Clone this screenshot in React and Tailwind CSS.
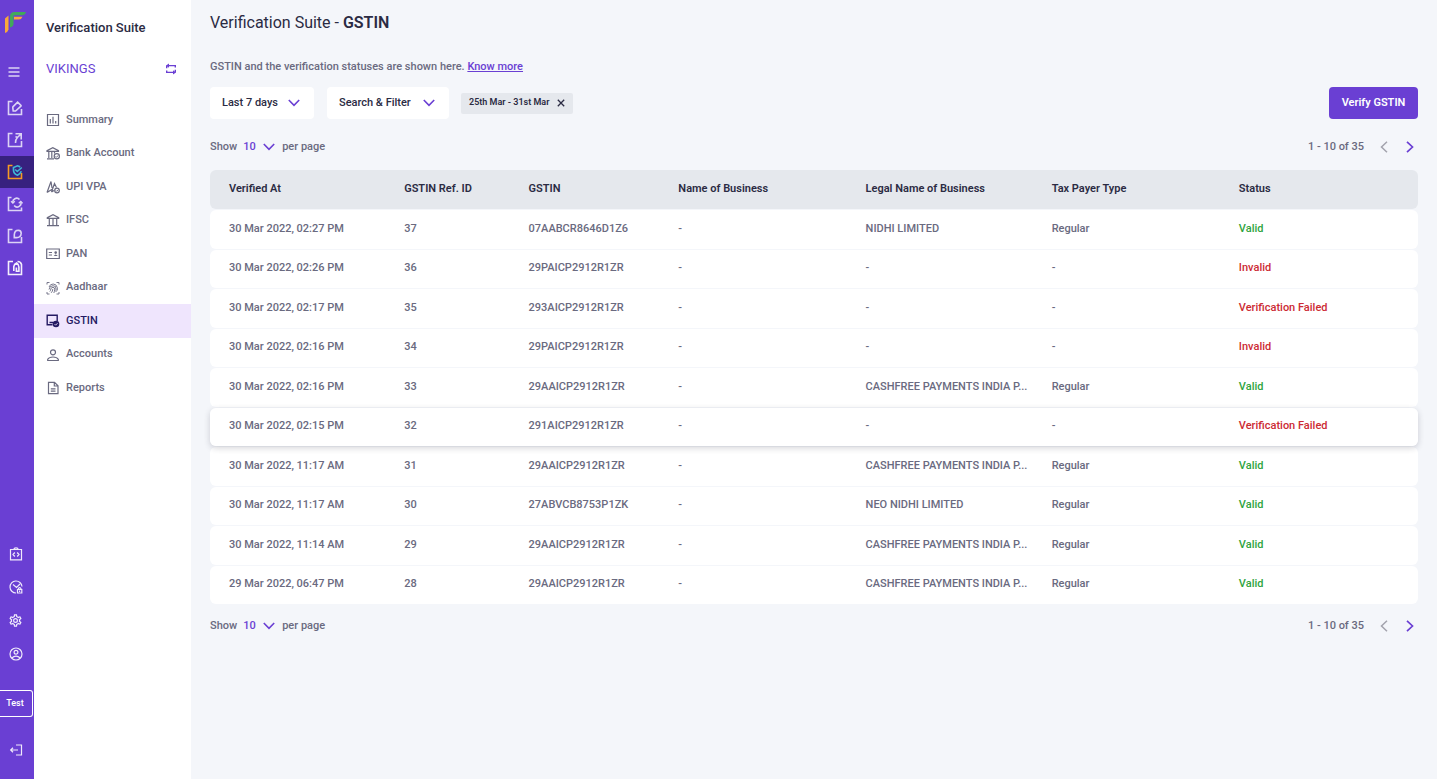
import React from "react";

const frame = "M5.500 1.500H1.500V14.500H14.500V9";

function RailIcon({ children, label, active }) {
  return (
    <a
      href="#"
      aria-label={label}
      className={
        active
          ? "flex h-8 w-full items-center justify-center bg-[#37217f] pr-1"
          : "flex h-8 w-full items-center justify-center pr-1 text-[#dcd3f5]"
      }
    >
      <svg viewBox="0 0 16 16" className="size-4" fill="none" stroke="currentColor" strokeWidth="1.6">
        {children}
      </svg>
    </a>
  );
}

function Rail() {
  return (
    <nav aria-label="Products" className="flex w-[34px] shrink-0 flex-col bg-[#6a3fd3]">
      <a href="#" aria-label="Home" className="flex h-[50px] items-start pt-3 pl-[5px]">
        <svg viewBox="0 0 21 21" className="size-[21px]">
          <path d="M0 21V6.500L3.500 3.500V17.500Q2.800 20.200 0 21Z" fill="#f9a83a" />
          <path d="M9 7.500V4.800H17.500Q16.500 7.500 14 7.500Z" fill="#f9a83a" />
          <path d="M5 15.500V4.500Q5 0 9.500 0H21Q20 3.300 17 3.300H9.500Q8.500 3.300 8.500 4.500V12Q8.300 14.800 5 15.500Z" fill="#41a95a" />
        </svg>
      </a>
      <button type="button" aria-label="Open menu" className="flex h-[42px] items-center justify-center pt-0.5 pr-[6px] text-[#dcd3f5]">
        <svg viewBox="0 0 12 12" className="size-3" fill="none" stroke="currentColor" strokeWidth="1.400">
          <path d="M.5 2H11.500M.5 6H11.500M.5 10H11.500" />
        </svg>
      </button>
      <RailIcon label="Payments">
        <path d={frame} />
        <path d="M10.600 2.200 13.900 5.300Q14.300 5.700 13.900 6.100L8.600 11H6.200L5.800 7.600Q5.700 7 6.100 6.600Z" />
      </RailIcon>
      <RailIcon label="Payouts">
        <path d={frame} />
        <path d="M8.500 1.800H14.200V7.500M13.800 2.200 10.600 5.300Q8.400 7.600 8.500 11M8.500 4.500 10.400 5.600" />
      </RailIcon>
      <RailIcon label="Verification Suite" active>
        <path d={frame} stroke="#f59b23" />
        <path d="M14.300 7.300Q13.300 10 10.500 11.200Q6.500 9.700 6.500 6V3.500L10.500 1.800L13.200 2.900" stroke="#3fb6d6" strokeWidth="1.700" />
        <path d="M8.200 5.500 10.300 7.500 14.800 3.500" stroke="#3fb6d6" />
      </RailIcon>
      <RailIcon label="Subscriptions">
        <path d="M4.500 1.500H1.500V14.500H14.500V11.500" />
        <path d="M6 7A3.800 3.800 0 0 1 12.500 3.500M13.600 5.500A3.800 3.800 0 0 1 7.200 9.500" />
        <path d="M4 5.300 5.900 7.200 7.800 5.300M11.800 7.300 13.700 5.400 15.600 7.300" strokeWidth="1.300" />
      </RailIcon>
      <RailIcon label="Payment forms">
        <path d={frame} />
        <path d="M7.300 9.600V6.800Q7.500 2.200 11.300 2.200Q14.200 2.400 14.200 5.200Q14 9.600 9.500 9.600Z" />
      </RailIcon>
      <RailIcon label="Accounts">
        <g stroke="#f3effc">
          <path d="M6 1.500H1.500V14.500H14.500V4.500Q13.800 1.500 10.500 1.500" />
          <path d="M6.800 11V6.500Q7.300 4 9.600 3Q11.900 4.500 11.900 7V11.200H9.400V7.500" />
        </g>
      </RailIcon>

      <div className="mt-auto flex flex-col text-[#efeafb]">
        <a href="#" aria-label="Developers" className="flex h-[33px] items-center justify-center pr-[3px]">
          <svg viewBox="0 0 14 14" className="size-[14px]" fill="none" stroke="currentColor" strokeWidth="1.200">
            <path d="M1.500 2.500H12.500V12.800H1.500ZM5 2.500Q5 .8 7 .8T9 2.500M5.800 5.500 4 7.500 5.800 9.500M8.200 5.500 10 7.500 8.200 9.500" />
          </svg>
        </a>
        <a href="#" aria-label="Activity" className="flex h-[34px] items-center justify-center pr-[3px]">
          <svg viewBox="0 0 14 14" className="size-[14px]" fill="none" stroke="currentColor" strokeWidth="1.200">
            <path d="M7 13A6 6 0 1 1 13 6.500M4 4.500 7.500 7.500 11 4" />
            <path d="M8.500 9.500H12.800V13H8.500ZM9.400 9.500V8.500Q10.600 6.800 11.900 8.500V9.500M10.600 10.500V12" />
          </svg>
        </a>
        <a href="#" aria-label="Settings" className="flex h-[33px] items-center justify-center pr-[3px]">
          <svg viewBox="0 0 24 24" className="size-[15px]" fill="currentColor">
            <path d="M19.430 12.980c.04-.32.07-.64.07-.98 0-.34-.03-.66-.07-.98l2.110-1.650c.19-.15.24-.42.12-.64l-2-3.460c-.09-.16-.26-.25-.44-.25-.06 0-.12.01-.17.03l-2.490 1c-.52-.4-1.080-.73-1.690-.98l-.38-2.650C14.460 2.180 14.250 2 14 2h-4c-.25 0-.46.18-.49.42l-.38 2.650c-.61.25-1.170.59-1.690.98l-2.490-1c-.06-.02-.12-.03-.18-.03-.17 0-.34.09-.43.25l-2 3.460c-.13.22-.07.49.12.64l2.110 1.650c-.04.32-.07.65-.07.98 0 .33.03.66.07.98l-2.110 1.650c-.19.15-.24.42-.12.64l2 3.460c.09.16.26.25.44.25.06 0 .12-.01.17-.03l2.490-1c.52.4 1.080.73 1.690.98l.38 2.650c.03.24.24.42.49.42h4c.25 0 .46-.18.49-.42l.38-2.650c.61-.25 1.170-.59 1.690-.98l2.490 1c.06.02.12.03.18.03.17 0 .34-.09.43-.25l2-3.460c.12-.22.07-.49-.12-.64l-2.110-1.650zm-1.980-1.710c.04.31.05.52.05.73 0 .21-.02.43-.05.73l-.14 1.130.89.7 1.080.84-.7 1.210-1.270-.51-1.040-.42-.9.680c-.43.32-.84.56-1.250.73l-1.060.43-.16 1.130-.2 1.350h-1.400l-.19-1.350-.16-1.130-1.060-.43c-.43-.18-.83-.41-1.230-.71l-.91-.7-1.060.43-1.270.51-.7-1.210 1.080-.84.89-.7-.14-1.130c-.03-.31-.05-.54-.05-.74s.02-.43.05-.73l.14-1.130-.89-.7-1.080-.84.7-1.210 1.270.51 1.040.42.9-.68c.43-.32.84-.56 1.250-.73l1.060-.43.16-1.130.2-1.350h1.390l.19 1.350.16 1.130 1.060.43c.43.18.83.41 1.230.71l.91.7 1.060-.43 1.270-.51.7 1.210-1.070.85-.89.7.14 1.130zM12 8a4 4 0 1 0 0 8 4 4 0 0 0 0-8zm0 6a2 2 0 1 1 0-4 2 2 0 0 1 0 4z" />
          </svg>
        </a>
        <a href="#" aria-label="Profile" className="flex h-[34px] items-center justify-center pr-[3px]">
          <svg viewBox="0 0 14 14" className="size-[14px]" fill="none" stroke="currentColor" strokeWidth="1.200">
            <circle cx="7" cy="7" r="6" />
            <circle cx="7" cy="5.300" r="1.900" />
            <path d="M2.800 11Q7 7.200 11.200 11" />
          </svg>
        </a>
        <button type="button" className="mt-[19px] mr-px h-[27px] rounded-r-[3px] border border-l-0 border-white pr-0.5 text-[9px] font-medium text-white">
          Test
        </button>
        <button type="button" aria-label="Log out" className="mt-4 mb-3 flex h-[34px] items-center justify-center pr-[3px]">
          <svg viewBox="0 0 14 14" className="size-[14px]" fill="none" stroke="currentColor" strokeWidth="1.200">
            <path d="M7 2H12.500V12H7M1.500 7H9M4 4.800 1.700 7 4 9.200" />
          </svg>
        </button>
      </div>
    </nav>
  );
}

const menu = [
  {
    name: "Summary",
    icon: <path d="M1.500 1.500H12.500V12.500H1.500ZM4.300 10.500V6M7 10.500V3.800M9.700 10.500V8" />,
  },
  {
    name: "Bank Account",
    icon: (
      <>
        <path d="M2.800 12V6M5.800 12V6M8.500 7.500V6M1 12.800H8M1 5.300H12.500V4.700L6.800 1.700 1 4.700Z" />
        <circle cx="10.800" cy="10.300" r="2.600" />
        <path d="M9.600 10.400 10.500 11.300 12.200 9.400" strokeWidth="1" />
      </>
    ),
  },
  {
    name: "UPI VPA",
    icon: (
      <>
        <path d="M1 12.500 5 1.500 6 8M1 12.500 6.500 9M5.500 12 8.500 3.500 10.500 7.500M5.500 12 8 10.500" />
        <circle cx="11" cy="10.500" r="2.300" />
        <path d="M9.900 10.500 10.700 11.300 12.200 9.700" strokeWidth="1" />
      </>
    ),
  },
  {
    name: "IFSC",
    icon: <path d="M3.300 12V6M7 12V6M10.700 12V6M1 12.700H13M1.300 5.300H12.700V4.700L7 1.700 1.300 4.700Z" />,
  },
  {
    name: "PAN",
    icon: (
      <>
        <path d="M.7 2H13.300V11.500H.7ZM2.800 5.500H6M2.800 8H6" />
        <circle cx="9.700" cy="5.600" r="1.300" fill="currentColor" stroke="none" />
        <path d="M7.700 9Q9.700 6 11.700 9Z" fill="currentColor" stroke="none" />
      </>
    ),
  },
  {
    name: "Aadhaar",
    icon: (
      <g strokeWidth="0.900">
        <path d="M1 3.500V1.500H3.500M10.500 1.500H13V3.500M1 11V13H3.500M10.500 13H13V11" />
        <path d="M3 6Q4 3 7.200 3T11.300 6.500V9.500M3 8.500Q3.500 4.700 7 4.700T10 8V11M3.800 10.500Q4.800 9.500 4.800 8Q5.200 6.300 7 6.300T8.600 8.500Q8.500 11 7.800 12M5.200 11.800Q6.800 10.300 6.800 8" />
      </g>
    ),
  },
  {
    name: "GSTIN",
    icon: (
      <>
        <path d="M6.500 10.800H1.200V1.200H11.200V7M3.500 8.500H7" strokeWidth="1.400" />
        <circle cx="10" cy="10" r="3.300" fill="currentColor" stroke="none" />
        <path d="M8.500 10 9.700 11.200 11.600 9.100" stroke="#efe5fd" strokeWidth="0.800" />
      </>
    ),
  },
  {
    name: "Accounts",
    icon: (
      <>
        <circle cx="7" cy="4.300" r="2.500" />
        <path d="M1.700 12.500V11.300Q3 9 7 9T12.300 11.300V12.500Z" />
      </>
    ),
  },
  {
    name: "Reports",
    icon: <path d="M2.500 1.300H8.500L12 4.800V12.700H2.500ZM8.300 1.500V5H12M4.800 7.800H9.500M4.800 10.200H9.500" />,
  },
];

function Sidebar() {
  return (
    <aside className="flex w-[157px] shrink-0 flex-col bg-white">
      <div className="mt-5 px-3 text-[13px] leading-4 font-medium text-[#2b2b43]">Verification Suite</div>
      <div className="mt-6 flex items-center justify-between pr-[14px] pl-3 text-[13px] leading-[18px] text-[#6a3fd3]">
        VIKINGS
        <button type="button" aria-label="Switch account">
          <svg viewBox="0 0 12 12" className="size-3" fill="none" stroke="currentColor" strokeWidth="1.400">
            <path d="M1.700 7.500V9.400H8.800M10.300 4.500V2.600H3.200M1.700 2.600V5.200M10.300 9.400V6.800" />
            <path d="M4 .4V4.800L1 2.600ZM8 7.200V11.600L11 9.400Z" fill="currentColor" stroke="none" />
          </svg>
        </button>
      </div>
      <nav aria-label="Verification Suite" className="mt-[25px] grid h-[302px] auto-rows-fr">
        {menu.map((m) => (
          <a
            key={m.name}
            href="#"
            className={
              m.name === "GSTIN"
                ? "flex items-center gap-[6px] bg-[#efe5fd] pl-3 text-[11px] font-medium text-[#251a63]"
                : "flex items-center gap-[6px] pl-3 text-[11px] font-medium text-[#6a6a80]"
            }
          >
            <svg viewBox="0 0 14 14" className="size-[14px]" fill="none" stroke="currentColor" strokeWidth="1.200">
              {m.icon}
            </svg>
            {m.name}
          </a>
        ))}
      </nav>
    </aside>
  );
}

function Chevron({ className }) {
  return (
    <svg viewBox="0 0 12 8" className={className} fill="none" stroke="currentColor" strokeWidth="1.600">
      <path d="M.8 1 6 6.400 11.200 1" />
    </svg>
  );
}

function Pager({ id }) {
  return (
    <div className="flex items-center justify-between text-[11px] leading-4 font-medium text-[#6a6a80]">
      <div className="flex items-center">
        <label htmlFor={id}>Show</label>
        <div className="relative ml-[6px] flex items-center text-[#6a3fd3]">
          <select id={id} defaultValue="10" className="w-[32px] appearance-none bg-transparent font-medium outline-none">
            <option>10</option>
            <option>25</option>
            <option>50</option>
          </select>
          <Chevron className="pointer-events-none absolute right-0 h-2 w-3" />
        </div>
        <span className="ml-[7px]">per page</span>
      </div>
      <div className="flex items-center">
        <span>1 - 10 of 35</span>
        <button type="button" aria-label="Previous page" className="ml-4 text-[#a3a3ad]">
          <svg viewBox="0 0 8 12" className="h-3 w-2" fill="none" stroke="currentColor" strokeWidth="1.500">
            <path d="M7 .8 1.500 6 7 11.200" />
          </svg>
        </button>
        <button type="button" aria-label="Next page" className="mr-1 ml-[18px] text-[#6a3fd3]">
          <svg viewBox="0 0 8 12" className="h-3 w-2" fill="none" stroke="currentColor" strokeWidth="1.700">
            <path d="M1 .8 6.500 6 1 11.200" />
          </svg>
        </button>
      </div>
    </div>
  );
}

const CF = "CASHFREE PAYMENTS INDIA P...";
const rows = [
  ["30 Mar 2022, 02:27 PM", "37", "07AABCR8646D1Z6", "NIDHI LIMITED", "Regular", "Valid"],
  ["30 Mar 2022, 02:26 PM", "36", "29PAICP2912R1ZR", "-", "-", "Invalid"],
  ["30 Mar 2022, 02:17 PM", "35", "293AICP2912R1ZR", "-", "-", "Verification Failed"],
  ["30 Mar 2022, 02:16 PM", "34", "29PAICP2912R1ZR", "-", "-", "Invalid"],
  ["30 Mar 2022, 02:16 PM", "33", "29AAICP2912R1ZR", CF, "Regular", "Valid"],
  ["30 Mar 2022, 02:15 PM", "32", "291AICP2912R1ZR", "-", "-", "Verification Failed"],
  ["30 Mar 2022, 11:17 AM", "31", "29AAICP2912R1ZR", CF, "Regular", "Valid"],
  ["30 Mar 2022, 11:17 AM", "30", "27ABVCB8753P1ZK", "NEO NIDHI LIMITED", "Regular", "Valid"],
  ["30 Mar 2022, 11:14 AM", "29", "29AAICP2912R1ZR", CF, "Regular", "Valid"],
  ["29 Mar 2022, 06:47 PM", "28", "29AAICP2912R1ZR", CF, "Regular", "Valid"],
];

function Results() {
  return (
    <table className="h-[436px] w-full table-fixed border-separate border-spacing-x-0 border-spacing-y-px text-left text-[11px] leading-4">
      <colgroup>
        <col className="w-[14.5%]" />
        <col className="w-[10.3%]" />
        <col className="w-[12.4%]" />
        <col className="w-[15.5%]" />
        <col className="w-[15.4%]" />
        <col className="w-[15.5%]" />
        <col className="w-[16.4%]" />
      </colgroup>
      <thead>
        <tr className="h-[39px] text-[#2b2b43]">
          {["Verified At", "GSTIN Ref. ID", "GSTIN", "Name of Business", "Legal Name of Business", "Tax Payer Type", "Status"].map((h) => (
            <th key={h} scope="col" className="bg-[#e5e8ed] pb-0.5 pl-[19px] font-semibold first:rounded-l-md last:rounded-r-md">
              {h}
            </th>
          ))}
        </tr>
      </thead>
      <tbody className="text-[#6a6a80]">
        {rows.map(([at, id, gstin, legal, type, status]) => (
          <tr
            key={id}
            className={
              id === "32"
                ? "relative z-10 rounded-md font-medium shadow-[0_2px_6px_rgba(40,40,60,0.2)]"
                : "rounded-md font-medium"
            }
          >
            {[at, id, gstin, "-", legal, type].map((v, i) => (
              <td key={i} className="bg-white pb-px pl-[19px] whitespace-nowrap first:rounded-l-md">
                {v}
              </td>
            ))}
            <td
              className={
                status === "Valid"
                  ? "rounded-r-md bg-white pb-px pl-[19px] text-[#2fa440]"
                  : "rounded-r-md bg-white pb-px pl-[19px] text-[#cc2b33]"
              }
            >
              {status}
            </td>
          </tr>
        ))}
      </tbody>
    </table>
  );
}

export default function App() {
  return (
    <div className="flex min-h-screen bg-[#f4f6fa] font-['Roboto',sans-serif]">
      <Rail />
      <Sidebar />
      <main className="min-w-0 flex-1 px-[19px] pt-3">
        <h1 className="text-[16px] leading-[22px] text-[#2b2b43]">
          Verification Suite - <b className="font-semibold">GSTIN</b>
        </h1>
        <p className="mt-[25px] text-[11px] leading-4 font-medium text-[#6a6a80]">
          GSTIN and the verification statuses are shown here.{" "}
          <a href="#" className="text-[#6a3fd3] underline">
            Know more
          </a>
        </p>
        <div className="mt-3 flex items-center">
          <div className="relative flex items-center text-[#6a3fd3]">
            <select
              aria-label="Date range"
              defaultValue="Last 7 days"
              className="h-8 w-[104px] appearance-none rounded bg-white pl-3 text-[11px] font-medium text-[#2b2b43] outline-none"
            >
              <option>Last 7 days</option>
              <option>Today</option>
              <option>Yesterday</option>
            </select>
            <Chevron className="pointer-events-none absolute right-[14px] h-2 w-3" />
          </div>
          <button type="button" className="ml-[13px] flex h-8 w-[122px] items-center justify-between rounded bg-white pr-[14px] pl-3 text-[11px] font-medium text-[#2b2b43]">
            Search &amp; Filter
            <Chevron className="h-2 w-3 text-[#6a3fd3]" />
          </button>
          <span className="ml-3 flex h-[21px] w-[112px] items-center justify-between rounded-xs bg-[#e5e8ed] px-2 text-[9px] font-semibold text-[#2b2b43]">
            25th Mar - 31st Mar
            <button type="button" aria-label="Remove date filter">
              <svg viewBox="0 0 8 8" className="size-2" fill="none" stroke="currentColor" strokeWidth="1.300">
                <path d="M.8 .8 7.200 7.200M7.200 .8 .8 7.200" />
              </svg>
            </button>
          </span>
          <button type="button" className="ml-auto h-8 w-[89px] rounded bg-[#6a3fd3] text-[11px] font-semibold text-white">
            Verify GSTIN
          </button>
        </div>
        <div className="mt-5 mb-[14px]">
          <Pager id="page-size-top" />
        </div>
        <Results />
        <div className="mt-[13px]">
          <Pager id="page-size-bottom" />
        </div>
      </main>
    </div>
  );
}
